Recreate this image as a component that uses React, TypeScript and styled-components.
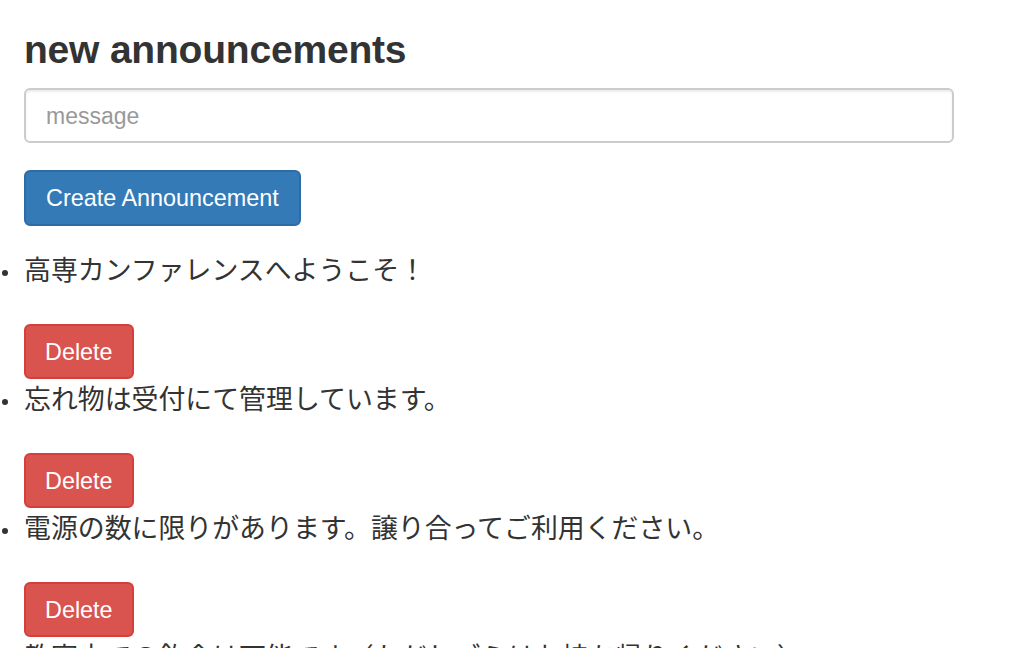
import styled, { createGlobalStyle } from "styled-components";

const announcements = [
  "高専カンファレンスへようこそ！",
  "忘れ物は受付にて管理しています。",
  "電源の数に限りがあります。譲り合ってご利用ください。",
  "教室内での飲食は可能です（ただしゴミはお持ち帰りください）",
];

const GlobalStyle = createGlobalStyle`
  html, body {
    margin: 0;
    padding: 0;
    overflow: hidden;
    background: #fff;
  }
  body {
    font-family: "Liberation Sans", Arial, "Noto Sans CJK JP", sans-serif;
    color: #333;
    -webkit-font-smoothing: antialiased;
  }
`;

const Page = styled.div`
  padding: 0 24px;
`;

const Heading = styled.h3`
  margin: 28px 0 16px;
  font-size: 39px;
  line-height: 44px;
  font-weight: 700;
  letter-spacing: -0.2px;
  color: #333;
`;

const Form = styled.form`
  display: flex;
  flex-direction: column;
  align-items: flex-start;
  gap: 27px;
`;

const MessageInput = styled.input`
  box-sizing: border-box;
  width: 930px;
  height: 55px;
  padding: 2px 20px 0;
  border: 2px solid #ccc;
  border-radius: 6px;
  box-shadow: inset 0 2px 2px rgba(0, 0, 0, 0.075);
  font-family: "Liberation Sans", Arial, sans-serif;
  font-size: 23px;
  color: #555;
  outline: none;

  &::placeholder {
    color: #999;
  }
`;

const Button = styled.button<{ $variant: "primary" | "danger" }>`
  box-sizing: border-box;
  height: ${({ $variant }) => ($variant === "primary" ? "56px" : "55px")};
  padding: 2px ${({ $variant }) => ($variant === "primary" ? "20px" : "19px")} 0;
  border: 2px solid
    ${({ $variant }) => ($variant === "primary" ? "#2e6da4" : "#d43f3a")};
  border-radius: 6px;
  background: ${({ $variant }) =>
    $variant === "primary" ? "#337ab7" : "#d9534f"};
  color: #fff;
  font-family: "Liberation Sans", Arial, sans-serif;
  font-size: 23.4px;
  line-height: 1;
  cursor: pointer;
`;

const List = styled.ul`
  margin: 26px 0 0 -24px;
  padding: 0 0 0 24px;
  list-style: none;
`;

const Item = styled.li`
  position: relative;
  padding-bottom: 2px;
`;

const Bullet = styled.span`
  position: absolute;
  left: -22px;
  top: 18px;
  width: 6px;
  height: 6px;
  border-radius: 50%;
  background: #333;
`;

const Message = styled.div`
  font-family: "Noto Sans CJK JP", sans-serif;
  font-size: 26.9px;
  line-height: 32px;
  padding-top: 1px;
  white-space: nowrap;
`;

const Actions = styled.div`
  margin-top: 39px;
  display: flex;
`;

export default function App() {
  return (
    <>
      <GlobalStyle />
      <Page>
        <Heading>new announcements</Heading>
        <Form onSubmit={(e) => e.preventDefault()}>
          <MessageInput placeholder="message" />
          <Button $variant="primary" type="submit">
            Create Announcement
          </Button>
        </Form>
        <List>
          {announcements.map((text) => (
            <Item key={text}>
              <Bullet />
              <Message>{text}</Message>
              <Actions>
                <Button $variant="danger" type="button">
                  Delete
                </Button>
              </Actions>
            </Item>
          ))}
        </List>
      </Page>
    </>
  );
}
